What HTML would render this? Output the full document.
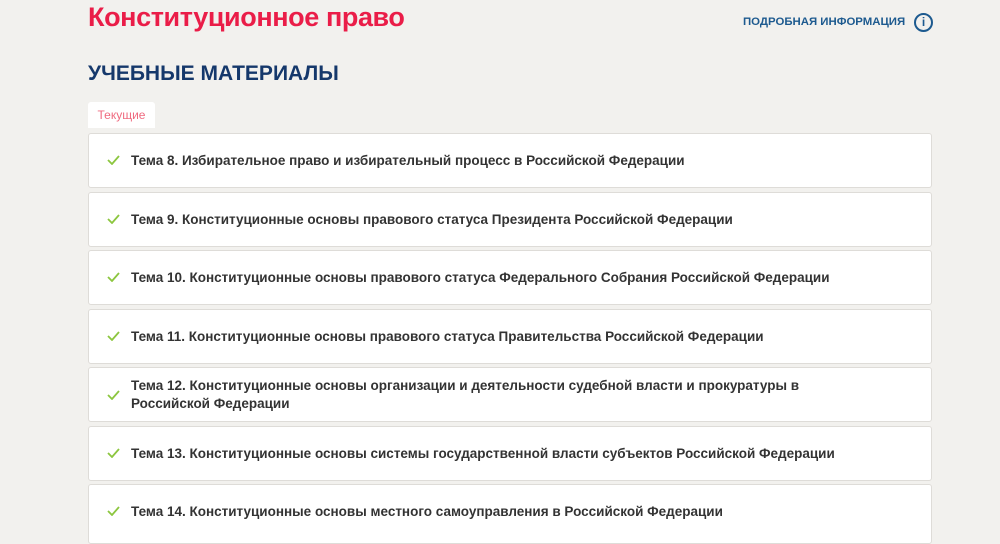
<!DOCTYPE html>
<html><head><meta charset="utf-8"><style>
body{margin:0;width:1000px;height:538px;background:#f2f1ee;font-family:"Liberation Sans",sans-serif;position:relative;overflow:hidden}
.t{position:absolute;left:88px;top:2px;font-size:27px;color:#ea1d48;font-weight:bold;letter-spacing:-0.4px}
.info{position:absolute;left:743px;top:16px;font-size:11.4px;color:#1d5a8f;font-weight:bold}
.ic{position:absolute;left:914px;top:13px;width:15px;height:15px;border:2px solid #1d5a8f;border-radius:50%;color:#1d5a8f;font-size:12px;font-weight:bold;text-align:center;line-height:15px}
.h{position:absolute;left:88px;top:62px;font-size:21px;font-weight:bold;color:#15386b}
.tab{position:absolute;left:88px;top:102px;width:67px;height:26px;background:#fff;border-radius:3px 3px 0 0;color:#ef6a7f;font-size:12px;text-align:center;line-height:26px}
.c{position:absolute;left:88px;width:844px;background:#fff;border:1px solid #dedcd8;border-radius:3px;box-sizing:border-box}
.c span{position:absolute;left:42px;font-size:13.5px;font-weight:bold;color:#333;line-height:18px}
.c svg{position:absolute;left:18px}
</style></head><body>
<div class="t">Конституционное право</div>
<div class="info">ПОДРОБНАЯ ИНФОРМАЦИЯ</div><div class="ic">i</div>
<div class="h">УЧЕБНЫЕ МАТЕРИАЛЫ</div>
<div class="tab">Текущие</div>
<div class="c" style="top:133px;height:55px"><svg style="top:21px" width="13" height="10"><path d="M1 5l4 4 7-8" stroke="#8cc63f" stroke-width="1.8" fill="none"/></svg><span style="top:18px">Тема 8. Избирательное право и избирательный процесс в Российской Федерации</span></div>
<div class="c" style="top:192px;height:55px"><svg style="top:21px" width="13" height="10"><path d="M1 5l4 4 7-8" stroke="#8cc63f" stroke-width="1.8" fill="none"/></svg><span style="top:18px">Тема 9. Конституционные основы правового статуса Президента Российской Федерации</span></div>
<div class="c" style="top:250px;height:55px"><svg style="top:21px" width="13" height="10"><path d="M1 5l4 4 7-8" stroke="#8cc63f" stroke-width="1.8" fill="none"/></svg><span style="top:18px">Тема 10. Конституционные основы правового статуса Федерального Собрания Российской Федерации</span></div>
<div class="c" style="top:309px;height:55px"><svg style="top:21px" width="13" height="10"><path d="M1 5l4 4 7-8" stroke="#8cc63f" stroke-width="1.8" fill="none"/></svg><span style="top:18px">Тема 11. Конституционные основы правового статуса Правительства Российской Федерации</span></div>
<div class="c" style="top:367px;height:55px"><svg style="top:22px" width="13" height="10"><path d="M1 5l4 4 7-8" stroke="#8cc63f" stroke-width="1.8" fill="none"/></svg><span style="top:9px">Тема 12. Конституционные основы организации и деятельности судебной власти и прокуратуры в<br>Российской Федерации</span></div>
<div class="c" style="top:426px;height:55px"><svg style="top:21px" width="13" height="10"><path d="M1 5l4 4 7-8" stroke="#8cc63f" stroke-width="1.8" fill="none"/></svg><span style="top:18px">Тема 13. Конституционные основы системы государственной власти субъектов Российской Федерации</span></div>
<div class="c" style="top:484px;height:60px"><svg style="top:21px" width="13" height="10"><path d="M1 5l4 4 7-8" stroke="#8cc63f" stroke-width="1.8" fill="none"/></svg><span style="top:18px">Тема 14. Конституционные основы местного самоуправления в Российской Федерации</span></div>
</body></html>
